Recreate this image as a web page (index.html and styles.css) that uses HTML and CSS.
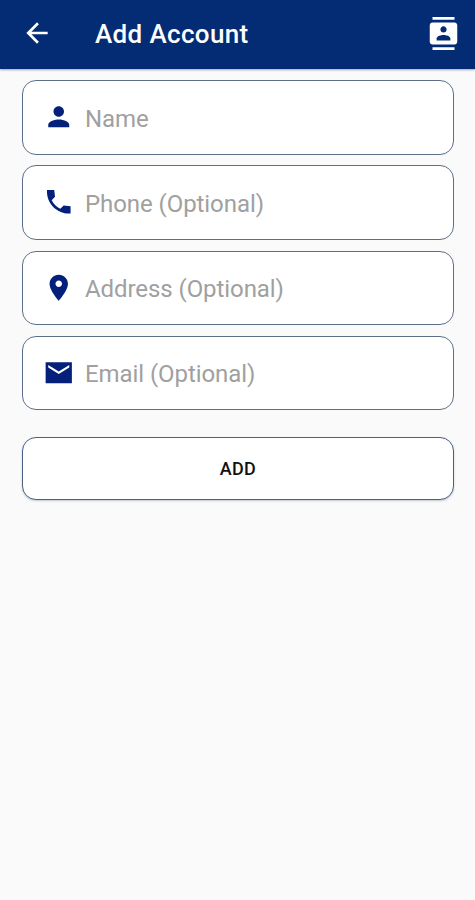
FILE: index.html
```html
<!DOCTYPE html>
<html lang="en">
<head>
<meta charset="utf-8">
<title>Add Account</title>
<link rel="stylesheet" href="styles.css">
</head>
<body>
<header class="app-bar">
  <svg class="icon" viewBox="0 0 24 24"><path d="M20 11H7.83l5.59-5.59L12 4l-8 8 8 8 1.41-1.41L7.83 13H20v-2z"/></svg>
  <h1 class="title">Add Account</h1>
  <svg class="icon contacts" viewBox="0 0 24 24"><path d="M20 0H4v2h16V0zM4 24h16v-2H4v2zM20 4H4c-1.1 0-2 .9-2 2v12c0 1.100.9 2 2 2h16c1.100 0 2-.9 2-2V6c0-1.100-.9-2-2-2zm-8 2.750c1.240 0 2.250 1.010 2.250 2.250s-1.010 2.250-2.250 2.250S9.750 10.240 9.750 9 10.760 6.750 12 6.750zM17 17H7v-1.500c0-1.670 3.330-2.500 5-2.500s5 .83 5 2.500V17z"/></svg>
</header>
<main class="form">
  <label class="field">
    <svg class="icon" viewBox="0 0 24 24"><path d="M12 12c2.210 0 4-1.790 4-4s-1.790-4-4-4-4 1.790-4 4 1.790 4 4 4zm0 2c-2.670 0-8 1.340-8 4v2h16v-2c0-2.660-5.330-4-8-4z"/></svg>
    <span class="hint">Name</span>
  </label>
  <label class="field">
    <svg class="icon" viewBox="0 0 24 24"><path d="M21 15.460l-5.270-.61-2.520 2.520c-2.830-1.440-5.150-3.750-6.590-6.590l2.530-2.530L8.540 3H3.030C2.450 13.180 10.820 21.550 21 20.970v-5.510z"/></svg>
    <span class="hint">Phone (Optional)</span>
  </label>
  <label class="field">
    <svg class="icon" viewBox="0 0 24 24"><path d="M12 2C8.130 2 5 5.130 5 9c0 5.250 7 13 7 13s7-7.750 7-13c0-3.870-3.130-7-7-7zm0 9.500c-1.380 0-2.500-1.120-2.500-2.500s1.120-2.500 2.500-2.500 2.500 1.120 2.500 2.500-1.120 2.500-2.500 2.500z"/></svg>
    <span class="hint">Address (Optional)</span>
  </label>
  <label class="field">
    <svg class="icon" viewBox="0 0 24 24"><path d="M22 4H2v16h20V4zm-2 4l-8 5-8-5V6l8 5 8-5v2z"/></svg>
    <span class="hint">Email (Optional)</span>
  </label>
  <button class="add" type="button">ADD</button>
</main>
</body>
</html>
```
FILE: styles.css
```css
* {
  box-sizing: border-box;
}

body {
  margin: 0;
  min-height: 100vh;
  background: #fafafa;
  font-family: Roboto, "Liberation Sans", sans-serif;
}

.icon {
  display: block;
  flex: none;
  width: 32px;
  height: 32px;
  fill: currentColor;
}

.app-bar {
  display: flex;
  align-items: center;
  height: 69px;
  padding: 0 15px 3px 21px;
  background: #042c74;
  color: #fff;
  box-shadow: 0 1px 2px rgba(0, 0, 40, 0.35);
}

.title {
  flex: 1;
  margin: 2px 0 0 42px;
  font-size: 26px;
  font-weight: 500;
  line-height: 32px;
  letter-spacing: 0.35px;
}

.contacts {
  width: 33px;
  height: 33px;
}

.form {
  display: flex;
  flex-direction: column;
  padding: 11.400px 21px 0 22px;
}

.field {
  display: flex;
  align-items: center;
  height: 74.500px;
  margin-bottom: 10.600px;
  padding: 0 20px;
  background: #fff;
  border: 1px solid #5c6f88;
  border-radius: 14px;
  color: #04207a;
}

.field .icon {
  width: 31.500px;
  height: 31.500px;
  margin: 0 10.500px 1px 0;
}

.hint {
  margin-top: 3px;
  color: #a0a0a0;
  font-size: 24px;
  line-height: 32px;
  letter-spacing: -0.07px;
}

.add {
  height: 63px;
  margin-top: 16.300px;
  padding: 1px 0 0;
  background: #fff;
  border: 1px solid #4a5f82;
  border-radius: 14px;
  box-shadow: 0 1px 2px rgba(30, 60, 110, 0.25);
  color: #111;
  font: 500 18px/24px Roboto, "Liberation Sans", sans-serif;
  letter-spacing: 0.3px;
}
```
